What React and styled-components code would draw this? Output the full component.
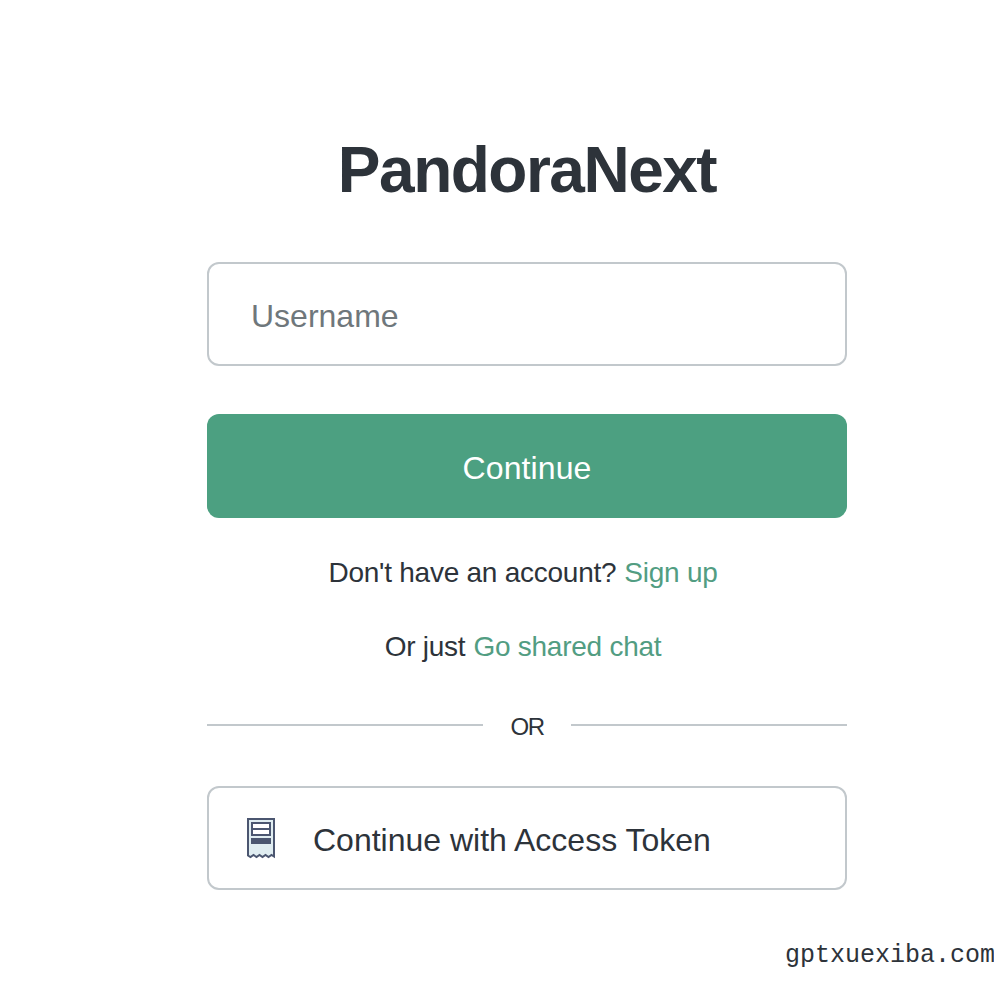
import React, { useState } from "react";
import styled, { createGlobalStyle } from "styled-components";

const GlobalStyle = createGlobalStyle`
  body {
    margin: 0;
    background: #fff;
    color: #2d333a;
    font-family: "Liberation Sans", Arial, sans-serif;
    overflow: hidden;
  }
  * {
    box-sizing: border-box;
  }
`;

const ReceiptIcon = () => (
  <svg width="30" height="42" viewBox="0 0 30 42" fill="none">
    <path
      d="M2 2H28V39.5L25.5 38L22.5 40L19.5 38L16.5 40L13.5 38L10.5 40L7.5 38L4.5 40L2 38.5Z"
      fill="#e0edf1"
      stroke="#4b5670"
      strokeWidth="2"
    />
    <rect x="6" y="6" width="18" height="12" fill="#fff" stroke="#4b5670" strokeWidth="2" />
    <path d="M6 12H24" stroke="#4b5670" strokeWidth="2" />
    <rect x="5" y="21" width="20" height="6" fill="#4b5670" />
  </svg>
);

const App = () => {
  const [username, setUsername] = useState("");

  return (
    <>
      <GlobalStyle />
      <Page>
        <Panel>
          <Title>PandoraNext</Title>
          <Input
            placeholder="Username"
            value={username}
            onChange={(e) => setUsername(e.target.value)}
          />
          <SubmitButton>Continue</SubmitButton>
          <Note>
            <Text>Don't have an account?</Text>
            <NoteLink href="#">Sign up</NoteLink>
          </Note>
          <Note>
            <Text>Or just</Text>
            <NoteLink href="#">Go shared chat</NoteLink>
          </Note>
          <Divider>
            <Line />
            <OrText>OR</OrText>
            <Line />
          </Divider>
          <TokenButton>
            <ReceiptIcon />
            <span>Continue with Access Token</span>
          </TokenButton>
        </Panel>
        <Watermark>gptxuexiba.com</Watermark>
      </Page>
    </>
  );
};

export default App;

const Page = styled.div`
  width: 994px;
  height: 988px;
  overflow: hidden;
`;

const Panel = styled.main`
  display: flex;
  flex-direction: column;
  width: 640px;
  margin-left: 207px;
  padding-top: 132px;
`;

const Title = styled.h1`
  margin: 0 0 54px;
  font-size: 64px;
  line-height: 76px;
  font-weight: 700;
  letter-spacing: -1.5px;
  text-align: center;
`;

const Input = styled.input`
  height: 104px;
  padding: 4px 42px 0;
  border: 2px solid #c2c8cc;
  border-radius: 12px;
  outline: none;
  background: #fff;
  font-family: inherit;
  font-size: 32px;
  color: #2d333a;

  &::placeholder {
    color: #6f777b;
    opacity: 1;
  }
`;

const SubmitButton = styled.button`
  height: 104px;
  margin: 48px 0 37px;
  padding: 4px 0 0;
  border: none;
  border-radius: 12px;
  background: #4ca081;
  color: #fff;
  font-family: inherit;
  font-size: 32px;
  letter-spacing: 0.1px;
`;

const Note = styled.p`
  display: flex;
  justify-content: center;
  gap: 8px;
  width: 632px;
  margin: 0 0 38px;
  font-size: 28px;
  line-height: 36px;
`;

const Text = styled.span`
  letter-spacing: -0.25px;
`;

const NoteLink = styled.a`
  color: #529d82;
  letter-spacing: -0.25px;
  text-decoration: none;
`;

const Divider = styled.div`
  display: flex;
  align-items: center;
  height: 28px;
  margin: 8px 0 47px;
`;

const Line = styled.div`
  flex: 1;
  height: 2px;
  background: #c2c8cc;
`;

const OrText = styled.span`
  width: 88px;
  padding-top: 4px;
  font-size: 24px;
  line-height: 28px;
  letter-spacing: -1.4px;
  text-align: center;
`;

const TokenButton = styled.button`
  display: flex;
  align-items: center;
  height: 104px;
  padding: 0 37px;
  border: 2px solid #c2c8cc;
  border-radius: 12px;
  background: #fff;
  color: #2d333a;
  font-family: inherit;
  font-size: 32px;

  span {
    margin: 4px 0 0 37px;
  }
`;

const Watermark = styled.div`
  margin: 51px 0 0 785px;
  font-family: "Liberation Mono", monospace;
  font-size: 25px;
  line-height: 30px;
  white-space: nowrap;
`;
